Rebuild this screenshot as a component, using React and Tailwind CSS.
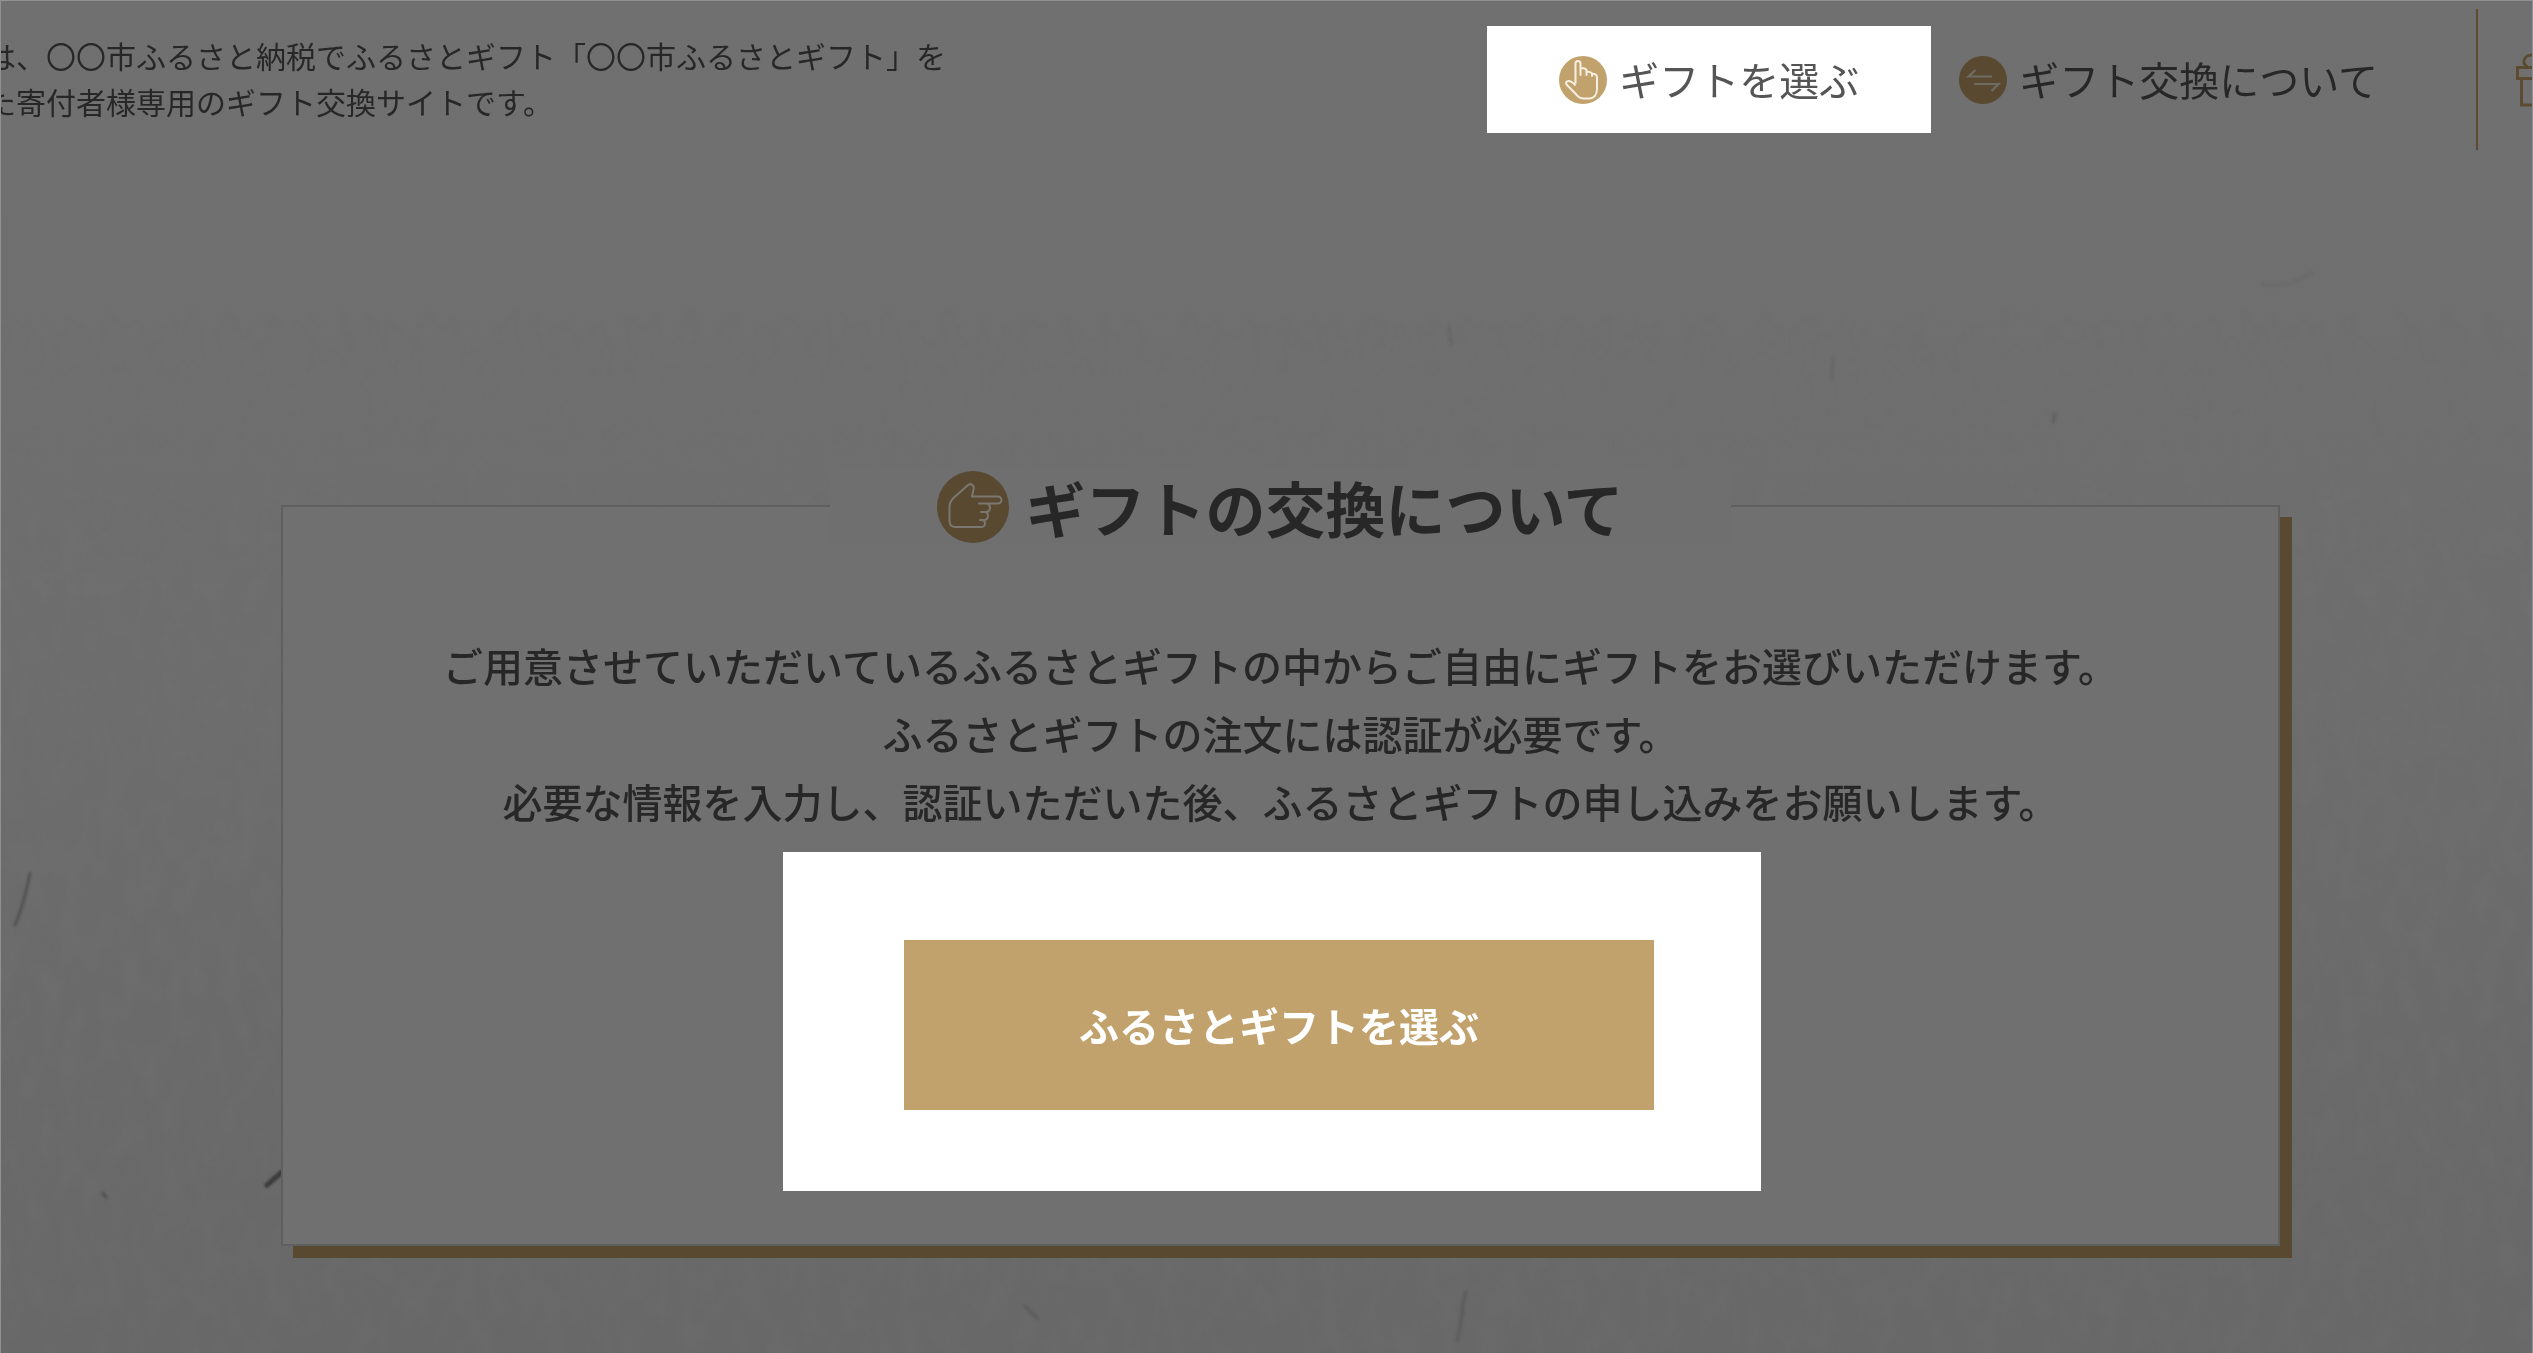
import React from 'react';

const bodyLines = [
  'ご用意させていただいているふるさとギフトの中からご自由にギフトをお選びいただけます。',
  'ふるさとギフトの注文には認証が必要です。',
  '必要な情報を入力し、認証いただいた後、ふるさとギフトの申し込みをお願いします。',
];

function TapIcon() {
  return (
    <svg viewBox="0 0 48 48" className="w-12 h-12 shrink-0" aria-hidden="true">
      <circle cx="24" cy="24" r="24" fill="#c2a26c" />
      <path
        d="M16.5 27.500V7.500a2.500 2.500 0 0 1 5 0V19v-6c.2-1.400 5.800-1 6 1.500V19v-2.500c.2-1.400 5.300-.8 5.500 1.500v2-1.500c1.500-1.400 5-.2 5 2.500V33c0 6-3.300 9.500-8 9.500h-5c-3.500 0-5.500-1.200-7.500-3.700L7.500 28.500c-1.200-1.800 0-3.500 2-3.500 2.800 0 4.500 1.500 7 4.500"
        fill="none" stroke="#f7efe2" strokeWidth="2" strokeLinejoin="round"
      />
    </svg>
  );
}

function SwapIcon() {
  return (
    <svg viewBox="0 0 48 48" className="w-12 h-12 shrink-0" aria-hidden="true">
      <circle cx="24" cy="24" r="24" fill="#584930" />
      <path d="M33 20.500H9.500l7-6.500M15 28h24.500l-7 7" fill="none" stroke="#706b62" strokeWidth="2.200" />
    </svg>
  );
}

function PointIcon() {
  return (
    <svg viewBox="0 0 72 72" className="w-18 h-18 shrink-0" aria-hidden="true">
      <circle cx="36" cy="36" r="36" fill="#584930" />
      <path
        d="M42 32.500h19a3 3 0 0 0 0-7H35l1.500-7c1.200-4.500-3.300-7-6-4L17 26.500c-2.800 2.500-4.500 5-4.500 9V50c0 4 2 6 6 6H44c5 0 5.500-7 .5-7H43 47c5 0 5.500-8 .5-8H44h5c5 0 5.500-8.500.5-8.500"
        fill="none" stroke="#7b7871" strokeWidth="2" strokeLinejoin="round" strokeLinecap="round"
      />
    </svg>
  );
}

function GiftIcon() {
  return (
    <svg viewBox="0 0 16 54" className="w-4 h-[54px] shrink-0" aria-hidden="true">
      <g fill="none" stroke="#5c4b31" strokeWidth="3">
        <path d="M1.500 14.500h48v11h-48zM5.500 25.500h40V52h-40z" />
        <path d="M12 14.500c-3-2-4.500-4-4-7 .6-3.500 4-5.500 8-5.500" />
      </g>
    </svg>
  );
}

// washi paper texture behind the page
function Paper() {
  return (
    <svg className="absolute inset-0 w-full h-full -z-10" viewBox="0 0 2533 1353" preserveAspectRatio="none" aria-hidden="true">
      <defs>
        <linearGradient id="shade" x1="0" y1="0" x2="0" y2="1">
          <stop offset="0" stopColor="#707070" />
          <stop offset="0.280" stopColor="#6f6f6f" />
          <stop offset="1" stopColor="#686868" />
        </linearGradient>
        <linearGradient id="fade" x1="0" y1="0" x2="0" y2="1">
          <stop offset="0.220" stopColor="#000" />
          <stop offset="0.450" stopColor="#fff" />
        </linearGradient>
        <mask id="fadeMask"><rect width="2533" height="1353" fill="url(#fade)" /></mask>
        <filter id="fibre" x="0" y="0" width="100%" height="100%">
          <feTurbulence type="fractalNoise" baseFrequency="0.05 0.025" numOctaves="3" seed="7" />
          <feColorMatrix values="0 0 0 0 0.3  0 0 0 0 0.3  0 0 0 0 0.3  0.5 0 0 0 -0.16" />
        </filter>
        <filter id="soft"><feGaussianBlur stdDeviation="1.200" /></filter>
      </defs>
      <rect width="2533" height="1353" fill="url(#shade)" />
      <g mask="url(#fadeMask)">
        <rect width="2533" height="1353" filter="url(#fibre)" opacity="0.250" />
      </g>
      <g fill="none" stroke="#4c4c4c" strokeWidth="3" strokeLinecap="round" filter="url(#soft)">
        <path d="M29 873c-4 20-8 36-15 52" opacity="0.800" />
        <path d="M266 1185l15-13" stroke="#3c3c3c" strokeWidth="5" />
        <path d="M102 1193l3 4" opacity="0.800" />
        <path d="M1466 1292c-5 16-3 30-9 48M1025 1306l12 12" opacity="0.400" />
        <path d="M1834 357l-2 20M1449 325l2 18" opacity="0.200" />
        <path d="M2055 413l-1 8" opacity="0.400" />
        <path d="M2264 284c18 2 34-2 48-12" stroke="#656565" opacity="0.500" />
      </g>
    </svg>
  );
}

export default function App() {
  return (
    <div
      lang="ja"
      className="relative isolate min-h-screen overflow-hidden border border-[#8f9292] border-b-0 text-[#272727] font-['Noto_Sans_CJK_JP',sans-serif]"
    >
      <Paper />

      <header className="flex items-center pt-2">
        <p className="-ml-[15px] flex-1 pb-1 whitespace-nowrap text-3xl leading-[46px]">
          は、〇〇市ふるさと納税でふるさとギフト「〇〇市ふるさとギフト」を<br />
          た寄付者様専用のギフト交換サイトです。
        </p>
        <nav className="flex items-center text-[40px] leading-[59px] whitespace-nowrap">
          <a href="#gifts" className="flex items-center gap-3 bg-white px-[72px] py-6 text-[#555]">
            <TapIcon />
            ギフトを選ぶ
          </a>
          <a href="#exchange" className="flex items-center gap-3 pl-7 pr-[98px]">
            <SwapIcon />
            ギフト交換について
          </a>
          <a href="#cart" aria-label="ギフト" className="flex h-[141px] items-center border-l-2 border-[#5c4b31] pl-[38px]">
            <GiftIcon />
          </a>
        </nav>
      </header>

      <main className="pt-[355px] pb-24 pl-[280px] pr-[252px]">
        <section
          id="exchange"
          className="flex flex-col items-center border-2 border-[#5f5f5f] bg-[#707070] pb-[53px] shadow-[12px_12px_0_#584930]"
        >
          <h1 className="-mt-[38px] flex w-[901px] items-center justify-center gap-4 bg-[#6f6f6f] text-6xl leading-[76px] font-bold">
            <PointIcon />
            ギフトの交換について
          </h1>
          <div className="mt-[86px] text-center text-[40px] leading-[68px] font-medium">
            {bodyLines.map((line) => (
              <p key={line}>{line}</p>
            ))}
          </div>
          <div id="gifts" className="mt-[17px] mr-[17px] bg-white pt-[88px] pr-[107px] pb-[81px] pl-[121px]">
            <button type="button" className="h-[170px] w-[750px] bg-[#c2a26c] text-[40px] font-bold text-white">
              ふるさとギフトを選ぶ
            </button>
          </div>
        </section>
      </main>
    </div>
  );
}
